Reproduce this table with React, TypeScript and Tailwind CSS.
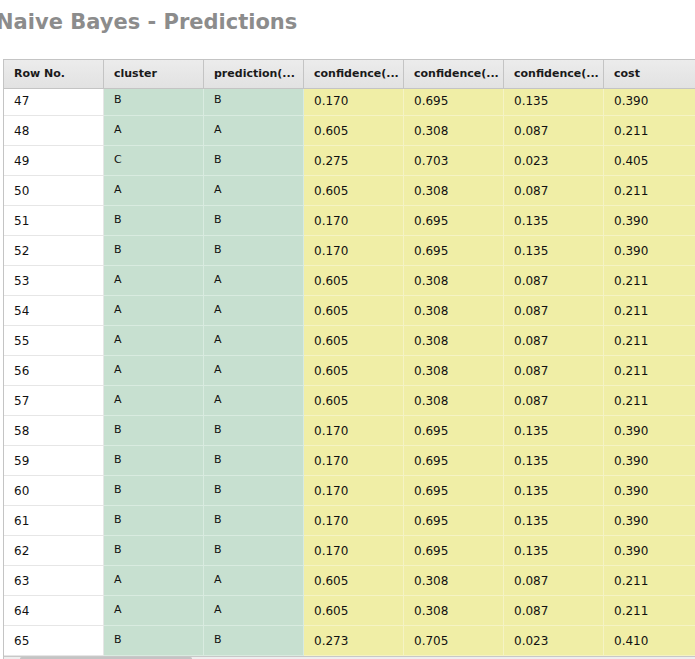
import React from "react";

const rows: [string, string, string, string, string, string, string][] = [
  ["47", "B", "B", "0.170", "0.695", "0.135", "0.390"],
  ["48", "A", "A", "0.605", "0.308", "0.087", "0.211"],
  ["49", "C", "B", "0.275", "0.703", "0.023", "0.405"],
  ["50", "A", "A", "0.605", "0.308", "0.087", "0.211"],
  ["51", "B", "B", "0.170", "0.695", "0.135", "0.390"],
  ["52", "B", "B", "0.170", "0.695", "0.135", "0.390"],
  ["53", "A", "A", "0.605", "0.308", "0.087", "0.211"],
  ["54", "A", "A", "0.605", "0.308", "0.087", "0.211"],
  ["55", "A", "A", "0.605", "0.308", "0.087", "0.211"],
  ["56", "A", "A", "0.605", "0.308", "0.087", "0.211"],
  ["57", "A", "A", "0.605", "0.308", "0.087", "0.211"],
  ["58", "B", "B", "0.170", "0.695", "0.135", "0.390"],
  ["59", "B", "B", "0.170", "0.695", "0.135", "0.390"],
  ["60", "B", "B", "0.170", "0.695", "0.135", "0.390"],
  ["61", "B", "B", "0.170", "0.695", "0.135", "0.390"],
  ["62", "B", "B", "0.170", "0.695", "0.135", "0.390"],
  ["63", "A", "A", "0.605", "0.308", "0.087", "0.211"],
  ["64", "A", "A", "0.605", "0.308", "0.087", "0.211"],
  ["65", "B", "B", "0.273", "0.705", "0.023", "0.410"],
];

const headers = ["Row No.", "cluster", "prediction(...", "confidence(...", "confidence(...", "confidence(...", "cost"];

export default function App() {
  return (
    <div className="w-[695px] h-[659px] overflow-hidden bg-white font-['DejaVu_Sans',sans-serif]">
      <div className="h-[59px] pt-[7px] ml-[-4px]">
        <h1 className="text-[21px] font-bold text-[#8c8c8c] leading-[30px] whitespace-nowrap">Naive Bayes - Predictions</h1>
      </div>
      <div className="ml-[3px] w-[800px] border-l border-[#c4c4c4]">
        <div className="grid grid-cols-[100px_100px_100px_100px_100px_100px_200px] h-[30px] bg-gradient-to-b from-[#ececec] to-[#e2e2e2] border-t border-b border-[#c4c4c4]">
          {headers.map((h, i) => (
            <div key={i} className="flex items-center pl-[10px] text-[11px] font-bold text-[#1a1a1a] border-r border-[#c4c4c4]">
              {h}
            </div>
          ))}
        </div>
        <div className="h-[567px] overflow-hidden">
          <div className="mt-[-3px]">
            {rows.map((r, ri) => (
              <div key={ri} className="grid grid-cols-[100px_100px_100px_100px_100px_100px_200px] h-[30px]">
                {r.map((c, ci) => {
                  const bg = ci === 0 ? "bg-white border-[#e6e6e6]" : ci < 3 ? "bg-[#c7e0d0] border-[#d9ebe0]" : "bg-[#f0eea6] border-[#f5f3c4]";
                  const txt = ci === 1 || ci === 2 ? "text-[11px]" : "text-[12px]";
                  return (
                    <div key={ci} className={`flex items-center pl-[10px] border-r border-b text-[#111] ${bg} ${txt}`}>
                      {c}
                    </div>
                  );
                })}
              </div>
            ))}
          </div>
        </div>
        <div className="h-[6px] border-t border-[#c8c8c8] bg-[#eeeeee] flex items-start">
          <div className="ml-[16px] w-[172px] h-[3px] bg-[#c4c4c4] rounded-sm"></div>
        </div>
      </div>
    </div>
  );
}
